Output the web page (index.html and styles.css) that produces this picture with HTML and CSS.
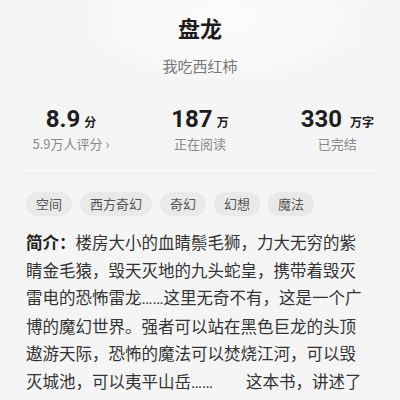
FILE: index.html
```html
<!DOCTYPE html>
<html lang="zh-CN">
<head>
<meta charset="utf-8">
<title>盘龙</title>
<link rel="stylesheet" href="styles.css">
</head>
<body>
<main class="book">
  <header class="book-head">
    <h1 class="book-title">盘龙</h1>
    <p class="book-author">我吃西红柿</p>
  </header>

  <section class="stats">
    <div class="stat stat-score">
      <div class="stat-value">8.9<span class="unit">分</span></div>
      <div class="stat-label">5.9万人评分<span class="chev">›</span></div>
    </div>
    <div class="stat stat-readers">
      <div class="stat-value">187<span class="unit">万</span></div>
      <div class="stat-label">正在阅读</div>
    </div>
    <div class="stat stat-words">
      <div class="stat-value">330<span class="unit wide">万字</span></div>
      <div class="stat-label">已完结</div>
    </div>
  </section>

  <ul class="tags">
    <li class="tag">空间</li>
    <li class="tag">西方奇幻</li>
    <li class="tag">奇幻</li>
    <li class="tag">幻想</li>
    <li class="tag">魔法</li>
  </ul>

  <p class="intro"><strong class="intro-label">简介：</strong>楼房大小的血睛鬃毛狮，力大无穷的紫睛金毛猿，毁天灭地的九头蛇皇，携带着毁灭雷电的恐怖雷龙<span class="dots">……</span>这里无奇不有，这是一个广博的魔幻世界。强者可以站在黑色巨龙的头顶遨游天际，恐怖的魔法可以焚烧江河，可以毁灭城池，可以夷平山岳<span class="dots">……</span>　　这本书，讲述了一个拥有“盘龙戒指”的少年的梦幻旅程。</p>
</main>
</body>
</html>
```

FILE: styles.css
```css
html, body {
  margin: 0;
  padding: 0;
}

body {
  width: 400px;
  height: 400px;
  overflow: hidden;
  background-color: #f5f5f5;
  background-image: radial-gradient(ellipse 150px 70px at 225px 18px, #fbfbfb 0%, #f9f9f9 60%, rgba(245,245,245,0) 100%);
  font-family: "Noto Sans CJK SC", "Noto Sans", sans-serif;
  color: #222;
}

.book {
  padding: 0 26px;
}

.book-head {
  text-align: center;
}

.book-title {
  margin: 12px 0 0;
  font-size: 22px;
  line-height: 30px;
  font-weight: 700;
  color: #1c1c1c;
}

.book-author {
  margin: 14px 0 0;
  font-size: 15px;
  line-height: 20px;
  color: #777;
}

.stats {
  display: grid;
  grid-template-columns: 90px 168px 1fr;
  margin-top: 28px;
  padding-bottom: 20px;
  border-bottom: 1px solid #e8e8e8;
}

.stat {
  text-align: center;
}

.stat-words {
  justify-self: end;
}

.stat-value {
  font-family: Roboto, "Noto Sans CJK SC", sans-serif;
  font-size: 24px;
  line-height: 30px;
  font-weight: 700;
  color: #1e1e1e;
}

.unit {
  font-family: "Noto Sans CJK SC", sans-serif;
  font-size: 12px;
  line-height: 1;
  font-weight: 700;
  margin-left: 4px;
}

.unit.wide {
  margin-left: 8px;
}

.stat-label {
  margin-top: 1px;
  font-size: 13px;
  line-height: 18px;
  color: #888;
}

.chev {
  margin-left: 3px;
  font-size: 13px;
}

.tags {
  display: flex;
  gap: 8px;
  margin: 18px 0 0;
  padding: 0;
  list-style: none;
}

.tag {
  height: 24px;
  padding: 0 10px;
  border-radius: 12px;
  background: #e9e9e9;
  font-size: 13px;
  line-height: 24px;
  color: #555;
}

.intro {
  margin: 13px 6px 0 0;
  font-size: 16.5px;
  line-height: 27.5px;
  color: #333;
}

.intro-label {
  font-weight: 700;
  color: #1e1e1e;
}

.dots {
  font-family: Roboto, sans-serif;
}
```
